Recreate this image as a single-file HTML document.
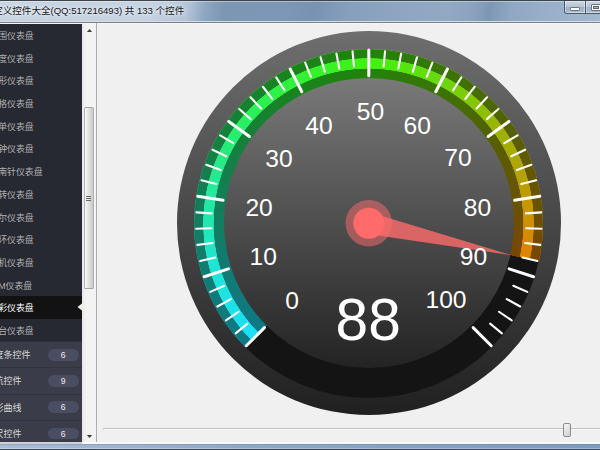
<!DOCTYPE html>
<html><head><meta charset="utf-8">
<style>
html,body{margin:0;padding:0;}
body{width:600px;height:450px;overflow:hidden;position:relative;background:#f0f0f0;font-family:"Liberation Sans","Noto Sans CJK SC",sans-serif;}
#title{position:absolute;left:0;top:0;width:600px;height:24.2px;background:linear-gradient(100deg,#c6d3e2 0px,#c4d2e1 150px,#b4c5d8 186px,#8da6c2 204px,#7c97b4 222px,#7d98b6 280px,#7893b2 312px,#869fbd 345px,#8ea6c2 400px,#92a9c4 440px,#8ca4c0 465px,#7c97b5 484px,#90a8c4 506px,#9ab0ca 545px,#a5b9d0 600px);}
#title .topline{position:absolute;left:0;top:0;width:600px;height:1px;background:#3e444d;}
#title .hl{position:absolute;left:0;top:0.9px;width:600px;height:1.1px;background:rgba(255,255,255,.38);}
#title .b1{position:absolute;left:0;top:20.9px;width:600px;height:1.2px;background:#d3dde8;}
#title .b2{position:absolute;left:0;top:22.1px;width:600px;height:0.8px;background:#7c8188;}
#title .b3{position:absolute;left:0;top:22.9px;width:600px;height:1.3px;background:#f6f6f6;}
#title .txt{position:absolute;left:-6.8px;top:3.8px;font-size:9.55px;line-height:14px;color:#1a1a1a;white-space:nowrap;text-shadow:0 0 4px rgba(255,255,255,.9),0 0 6px rgba(255,255,255,.7);}
.wbtn{position:absolute;top:0.8px;height:13.4px;border:1px solid #505b6a;border-top:none;background:linear-gradient(#cdd7e2,#b7c5d5 48%,#9db0c6 52%,#adbed1);box-sizing:border-box;box-shadow:inset 0 0 0 0.7px rgba(255,255,255,.55);}
#side{position:absolute;left:0;top:24.2px;width:82px;height:418px;background:#262832;overflow:hidden;}
.row{position:absolute;left:0;width:82px;height:22.7px;line-height:25.8px;font-size:8.9px;color:#b0b0b0;white-space:nowrap;text-indent:-1.8px;}
.row.sel{background:#121212;color:#fff;}
.head{position:absolute;left:0;width:82px;height:26.3px;line-height:26.3px;font-size:9px;color:#d8d8d8;background:#3a3c49;white-space:nowrap;border-top:1px solid #30323d;box-sizing:border-box;}
.badge{position:absolute;left:47.8px;top:6.8px;width:30.8px;height:11.8px;border-radius:6px;background:#4b4e63;color:#ececec;font-size:8.6px;line-height:12.4px;text-align:center;}
#sb{position:absolute;left:82px;top:24px;width:13.6px;height:418.5px;background:linear-gradient(90deg,#e8e8e8,#f3f3f3 30%,#f3f3f3);}
#thumb{position:absolute;left:83.7px;top:107.3px;width:10.6px;height:182px;box-sizing:border-box;border:1px solid #b2b2b2;border-top-color:#a4a4a4;border-bottom-color:#a4a4a4;border-radius:1.5px;background:linear-gradient(90deg,#f6f6f6,#e4e4e4 45%,#c8c8c8);}
#sbr1{position:absolute;left:95.6px;top:23px;width:0.8px;height:420px;background:#fcfcfc;}
#sbr2{position:absolute;left:96.1px;top:22.5px;width:0.9px;height:420px;background:#a9adb5;}
.grip{position:absolute;left:86px;width:5px;height:1px;background:#666;}
#bottom1{position:absolute;left:0;top:442.2px;width:600px;height:1.6px;background:linear-gradient(90deg,#cfd3d8 0,#cfd3d8 82px,#f7f8f9 82px);}
#bottom1b{position:absolute;left:0;top:443.7px;width:600px;height:1.4px;background:linear-gradient(90deg,#9aa6b4,#8496ad 300px,#7a8da6);}
#bottom2{position:absolute;left:0;top:445px;width:600px;height:3px;background:linear-gradient(90deg,#a6bed8,#8ca8c9 250px,#7c9bbf);}
#bottom2b{position:absolute;left:0;top:447.8px;width:600px;height:1px;background:linear-gradient(90deg,#c0d4e8,#a4bdd9 300px,#9cb7d5);}
#bottom3{position:absolute;left:0;top:448.8px;width:600px;height:1.2px;background:#3f4856;}
#outer{position:absolute;left:176.84px;top:31.29px;width:383.92px;height:383.92px;border-radius:50%;background:linear-gradient(#6e6e6e,#202020);}
#ring{position:absolute;left:194.29px;top:48.74px;width:349.02px;height:349.02px;border-radius:50%;background:conic-gradient(from 225deg,rgb(28,222,248) 0.0deg, rgb(32,228,215) 27.0deg, rgb(36,232,160) 54.0deg, rgb(40,238,105) 81.0deg, rgb(48,242,54) 108.0deg, rgb(64,242,17) 135.0deg, rgb(108,216,12) 162.0deg, rgb(156,179,4) 189.0deg, rgb(194,154,4) 216.0deg, rgb(224,131,0) 237.6deg, #141414 237.6deg, #141414 360deg);}
#ringshade{position:absolute;left:194.29px;top:48.74px;width:349.02px;height:349.02px;border-radius:50%;background:radial-gradient(circle closest-side, rgba(0,0,0,.46) 88.57%, rgba(0,0,0,0) 88.87%, rgba(0,0,0,0) 94.57%, rgba(0,0,0,.46) 94.87%);
 -webkit-mask:conic-gradient(from 225deg,#000 0deg,#000 237.6deg,transparent 237.6deg);mask:conic-gradient(from 225deg,#000 0deg,#000 237.6deg,transparent 237.6deg);}
#inner{position:absolute;left:223.76px;top:78.21px;width:290.07px;height:290.07px;border-radius:50%;background:linear-gradient(#797979,#232323);}
svg{position:absolute;left:0;top:0;}
svg text{font-family:"Liberation Sans",sans-serif;fill:#fff;text-anchor:middle;}
#groove{position:absolute;left:103.3px;top:428.1px;width:497px;height:1px;background:#c2c2c2;border-bottom:1px solid #f9f9f9;border-left:1px solid #c2c2c2;}
#handle{position:absolute;left:563.1px;top:422.8px;width:7.8px;height:13.8px;box-sizing:border-box;border:1px solid #8c8c8c;border-radius:2px;background:linear-gradient(135deg,#f8f8f8,#e2e2e2 50%,#d2d2d2);}
</style></head><body>
<div id="title"><div class="topline"></div><div class="hl"></div>
<div class="txt">定义控件大全(QQ:517216493) 共 133 个控件</div>
<div class="wbtn" style="left:564.3px;width:21.7px;border-radius:0 0 0 3px;"><div style="position:absolute;left:5px;top:6.3px;width:9.6px;height:3.9px;background:#fff;border:0.9px solid #6a7582;border-radius:1.2px;box-sizing:border-box"></div></div>
<div class="wbtn" style="left:585px;width:20px;"><div style="position:absolute;left:5.2px;top:3px;width:10px;height:7.4px;background:#fff;border:0.9px solid #6a7582;border-radius:1px;box-sizing:border-box"><div style="position:absolute;left:1.2px;top:1.4px;width:5.4px;height:2.6px;border:0.9px solid #5c6878;background:#a9b6c6;box-sizing:border-box"></div></div></div>
<div class="b1"></div><div class="b2"></div><div class="b3"></div>
</div>
<div id="side">
<div style="position:absolute;left:0;top:-24.2px;width:82px;height:450px">
<div class="row" style="top:23.9px">围仪表盘</div>
<div class="row" style="top:46.6px">度仪表盘</div>
<div class="row" style="top:69.3px">形仪表盘</div>
<div class="row" style="top:92.0px">格仪表盘</div>
<div class="row" style="top:114.7px">单仪表盘</div>
<div class="row" style="top:137.4px">钟仪表盘</div>
<div class="row" style="top:160.1px">南针仪表盘</div>
<div class="row" style="top:182.8px">转仪表盘</div>
<div class="row" style="top:205.5px">尔仪表盘</div>
<div class="row" style="top:228.2px">环仪表盘</div>
<div class="row" style="top:250.9px">机仪表盘</div>
<div class="row" style="top:273.6px">M仪表盘</div>
<div class="row sel" style="top:296.3px">彩仪表盘</div>
<div class="row" style="top:319.0px">台仪表盘</div>
<div class="head" style="top:341.0px"><span class="ht" style="position:absolute;left:-5.4px">度条控件</span><span class="badge">6</span></div>
<div class="head" style="top:367.3px"><span class="ht" style="position:absolute;left:-5.4px">航控件</span><span class="badge">9</span></div>
<div class="head" style="top:393.6px"><span class="ht" style="position:absolute;left:-5.4px">形曲线</span><span class="badge">6</span></div>
<div class="head" style="top:419.9px"><span class="ht" style="position:absolute;left:-5.4px">尺控件</span><span class="badge">6</span></div>
</div>
</div>
<div id="sb"></div><div id="sbr1"></div><div id="sbr2"></div>
<div id="thumb"></div>
<div class="grip" style="top:195.6px"></div><div class="grip" style="top:197.8px"></div><div class="grip" style="top:200px"></div>
<div id="outer"></div><div id="ring"></div><div id="ringshade"></div><div id="inner"></div>
<div id="groove"></div><div id="handle"></div>
<svg width="600" height="450" viewBox="0 0 600 450">
<polygon points="77.5,307 82.3,303.2 82.3,310.8" fill="#f0f0e6"/>
<polygon points="86.9,32.1 92.1,32.1 89.5,28.9" fill="#404040"/>
<polygon points="86.9,434.9 92.1,434.9 89.5,438" fill="#3a3a3a"/>
<g stroke="#fff" stroke-linecap="round">
<line x1="264.46" y1="327.59" x2="246.36" y2="345.69" stroke-width="3"/>
<line x1="247.49" y1="323.61" x2="235.68" y2="333.37" stroke-width="2.1"/>
<line x1="238.58" y1="311.75" x2="225.91" y2="320.36" stroke-width="2.1"/>
<line x1="230.83" y1="299.10" x2="217.40" y2="306.48" stroke-width="2.1"/>
<line x1="224.30" y1="285.78" x2="210.24" y2="291.86" stroke-width="2.1"/>
<line x1="228.46" y1="268.85" x2="204.12" y2="276.76" stroke-width="3"/>
<line x1="215.15" y1="257.60" x2="200.20" y2="260.94" stroke-width="2.1"/>
<line x1="212.59" y1="242.98" x2="197.40" y2="244.90" stroke-width="2.1"/>
<line x1="211.43" y1="228.20" x2="196.12" y2="228.68" stroke-width="2.1"/>
<line x1="211.66" y1="213.36" x2="196.38" y2="212.40" stroke-width="2.1"/>
<line x1="223.06" y1="200.17" x2="197.78" y2="196.16" stroke-width="3"/>
<line x1="216.30" y1="184.09" x2="201.46" y2="180.29" stroke-width="2.1"/>
<line x1="220.66" y1="169.92" x2="206.25" y2="164.73" stroke-width="2.1"/>
<line x1="226.34" y1="156.21" x2="212.48" y2="149.69" stroke-width="2.1"/>
<line x1="233.28" y1="143.10" x2="220.09" y2="135.31" stroke-width="2.1"/>
<line x1="249.42" y1="136.52" x2="228.72" y2="121.47" stroke-width="3"/>
<line x1="250.70" y1="119.13" x2="239.21" y2="109.00" stroke-width="2.1"/>
<line x1="261.02" y1="108.48" x2="250.53" y2="97.31" stroke-width="2.1"/>
<line x1="272.30" y1="98.84" x2="262.91" y2="86.74" stroke-width="2.1"/>
<line x1="284.44" y1="90.31" x2="276.23" y2="77.38" stroke-width="2.1"/>
<line x1="301.81" y1="91.77" x2="290.19" y2="68.97" stroke-width="3"/>
<line x1="310.84" y1="76.86" x2="305.20" y2="62.62" stroke-width="2.1"/>
<line x1="324.87" y1="72.05" x2="320.60" y2="57.34" stroke-width="2.1"/>
<line x1="339.30" y1="68.59" x2="336.43" y2="53.55" stroke-width="2.1"/>
<line x1="353.98" y1="66.50" x2="352.54" y2="51.25" stroke-width="2.1"/>
<line x1="368.80" y1="75.69" x2="368.80" y2="50.10" stroke-width="3"/>
<line x1="383.62" y1="66.50" x2="385.06" y2="51.25" stroke-width="2.1"/>
<line x1="398.30" y1="68.59" x2="401.17" y2="53.55" stroke-width="2.1"/>
<line x1="412.73" y1="72.05" x2="417.00" y2="57.34" stroke-width="2.1"/>
<line x1="426.76" y1="76.86" x2="432.40" y2="62.62" stroke-width="2.1"/>
<line x1="435.79" y1="91.77" x2="447.41" y2="68.97" stroke-width="3"/>
<line x1="453.16" y1="90.31" x2="461.37" y2="77.38" stroke-width="2.1"/>
<line x1="465.30" y1="98.84" x2="474.69" y2="86.74" stroke-width="2.1"/>
<line x1="476.58" y1="108.48" x2="487.07" y2="97.31" stroke-width="2.1"/>
<line x1="486.90" y1="119.13" x2="498.39" y2="109.00" stroke-width="2.1"/>
<line x1="488.18" y1="136.52" x2="508.88" y2="121.47" stroke-width="3"/>
<line x1="504.32" y1="143.10" x2="517.51" y2="135.31" stroke-width="2.1"/>
<line x1="511.26" y1="156.21" x2="525.12" y2="149.69" stroke-width="2.1"/>
<line x1="516.94" y1="169.92" x2="531.35" y2="164.73" stroke-width="2.1"/>
<line x1="521.30" y1="184.09" x2="536.14" y2="180.29" stroke-width="2.1"/>
<line x1="514.54" y1="200.17" x2="539.82" y2="196.16" stroke-width="3"/>
<line x1="525.94" y1="213.36" x2="541.22" y2="212.40" stroke-width="2.1"/>
<line x1="526.17" y1="228.20" x2="541.48" y2="228.68" stroke-width="2.1"/>
<line x1="525.01" y1="242.98" x2="540.20" y2="244.90" stroke-width="2.1"/>
<line x1="522.45" y1="257.60" x2="537.40" y2="260.94" stroke-width="2.1"/>
<line x1="509.14" y1="268.85" x2="533.48" y2="276.76" stroke-width="3"/>
<line x1="513.30" y1="285.78" x2="527.36" y2="291.86" stroke-width="2.1"/>
<line x1="506.77" y1="299.10" x2="520.20" y2="306.48" stroke-width="2.1"/>
<line x1="499.02" y1="311.75" x2="511.69" y2="320.36" stroke-width="2.1"/>
<line x1="490.11" y1="323.61" x2="501.92" y2="333.37" stroke-width="2.1"/>
<line x1="473.14" y1="327.59" x2="491.24" y2="345.69" stroke-width="3"/>
</g>
<polygon points="371.17,212.65 366.43,233.85 511.67,255.18" fill="#ff6b6b" fill-opacity="0.8"/>
<circle cx="368.8" cy="223.25" r="23.27" fill="#ff6b6b" fill-opacity="0.5"/>
<circle cx="368.8" cy="223.25" r="15.51" fill="#ff6b6b"/>
<g font-size="24.6">
<text x="292.0" y="309.1">0</text>
<text x="263.3" y="264.5">10</text>
<text x="259.1" y="216.1">20</text>
<text x="278.9" y="167.1">30</text>
<text x="319.0" y="134.4">40</text>
<text x="370.4" y="120.0">50</text>
<text x="417.2" y="133.7">60</text>
<text x="458.0" y="166.2">70</text>
<text x="477.5" y="216.0">80</text>
<text x="473.5" y="264.6">90</text>
<text x="446.0" y="308.4">100</text>
</g>
<text x="368.2" y="340.4" font-size="58.6">88</text>
</svg>
<div id="bottom1"></div><div id="bottom1b"></div><div id="bottom2"></div><div id="bottom2b"></div><div id="bottom3"></div>
</body></html>
